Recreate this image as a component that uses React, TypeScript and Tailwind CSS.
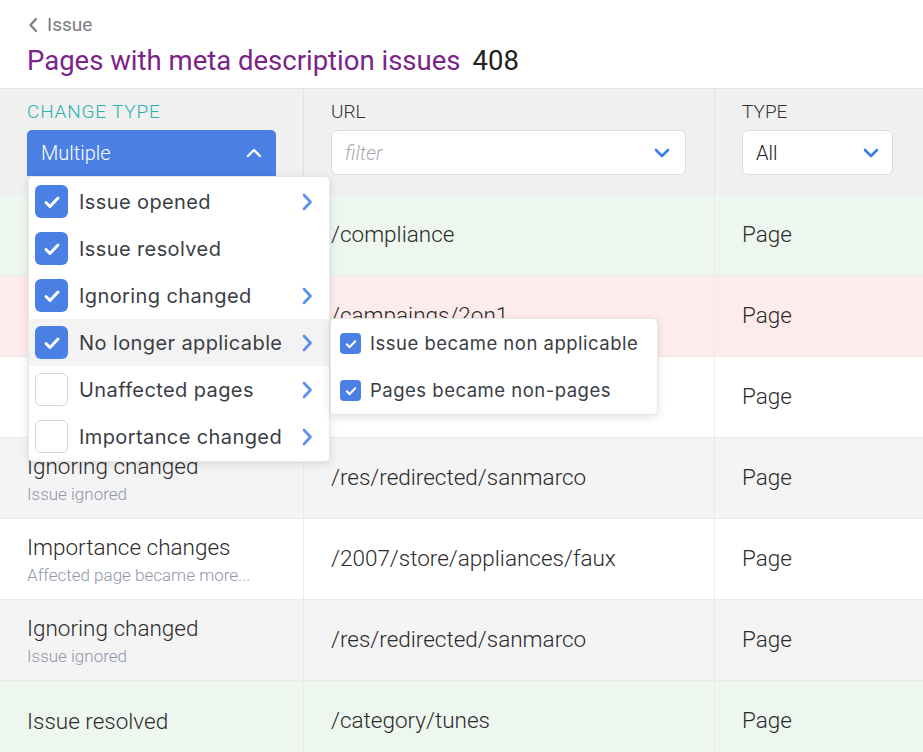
import React from "react";

const Check = ({ size = 18 }: { size?: number }) => (
  <svg width={size} height={size} viewBox="0 0 20 20" fill="none">
    <path d="M4 10.5l4 4 8-8.5" stroke="white" strokeWidth="3" strokeLinecap="round" strokeLinejoin="round" />
  </svg>
);

const ChevronRight = () => (
  <svg width="14" height="20" viewBox="0 0 14 20" fill="none">
    <path d="M4 3l6.5 7L4 17" stroke="#5a8ef0" strokeWidth="2.6" strokeLinecap="round" strokeLinejoin="round" />
  </svg>
);

const ChevronDown = ({ color = "#3a7ee8" }: { color?: string }) => (
  <svg width="16" height="10" viewBox="0 0 16 10" fill="none">
    <path d="M2 2l6 6 6-6" stroke={color} strokeWidth="2.6" strokeLinecap="round" strokeLinejoin="round" />
  </svg>
);

const ChevronUp = () => (
  <svg width="16" height="10" viewBox="0 0 16 10" fill="none">
    <path d="M2 8l6-6 6 6" stroke="white" strokeWidth="2.4" strokeLinecap="round" strokeLinejoin="round" />
  </svg>
);

type Row = { title: string; sub?: string; url: string; type: string; bg: string };

const rows: Row[] = [
  { title: "Issue resolved", url: "/compliance", type: "Page", bg: "bg-[#edf7ef]" },
  { title: "Issue opened", url: "/campaings/2on1", type: "Page", bg: "bg-[#fdeceb]" },
  { title: "No longer applicable", url: "/blog/summer-sale", type: "Page", bg: "bg-white" },
  { title: "Ignoring changed", sub: "Issue ignored", url: "/res/redirected/sanmarco", type: "Page", bg: "bg-[#f4f4f4]" },
  { title: "Importance changes", sub: "Affected page became more...", url: "/2007/store/appliances/faux", type: "Page", bg: "bg-white" },
  { title: "Ignoring changed", sub: "Issue ignored", url: "/res/redirected/sanmarco", type: "Page", bg: "bg-[#f4f4f4]" },
  { title: "Issue resolved", url: "/category/tunes", type: "Page", bg: "bg-[#edf7ef]" },
];

const menuItems = [
  { label: "Issue opened", checked: true, arrow: true },
  { label: "Issue resolved", checked: true, arrow: false },
  { label: "Ignoring changed", checked: true, arrow: true },
  { label: "No longer applicable", checked: true, arrow: true, active: true },
  { label: "Unaffected pages", checked: false, arrow: true },
  { label: "Importance changed", checked: false, arrow: true },
];

export default function App() {
  return (
    <div className="relative w-[923px] h-[752px] overflow-hidden bg-white font-['Roboto',sans-serif] text-[#2b2b2b]">
      {/* Page header */}
      <div className="h-[88px] px-[27px] pt-[12px]">
        <div className="flex items-center gap-[9px] h-[26px] text-[19px] text-[#7d7d7d]">
          <svg width="10" height="16" viewBox="0 0 10 16" fill="none" className="ml-[1px]">
            <path d="M8 2L2.5 8 8 14" stroke="#7d7d7d" strokeWidth="2.2" strokeLinecap="round" strokeLinejoin="round" />
          </svg>
          <span>Issue</span>
        </div>
        <div className="mt-[6px] flex items-baseline text-[27.5px] leading-[34px]">
          <span className="text-[#7b2488]">Pages with meta description issues</span>
          <span className="ml-[12px] text-[#222]">408</span>
        </div>
      </div>

      {/* Table header */}
      <div className="flex h-[107px] bg-[#f0f0f0] border-t border-[#e2e2e2]">
        <div className="w-[304px] shrink-0 border-r border-[#e2e2e2] pl-[27px] pt-[11px]">
          <div className="text-[19px] leading-[24px] tracking-[0.8px] text-[#2ab3ae] font-light">CHANGE TYPE</div>
          <div className="mt-[6px] w-[249px] h-[46px] rounded-t-[5px] bg-[#4a7fe3] flex items-center justify-between pl-[14px] pr-[14px]">
            <span className="text-[20px] text-white font-light">Multiple</span>
            <ChevronUp />
          </div>
        </div>
        <div className="w-[411px] shrink-0 border-r border-[#e2e2e2] pl-[27px] pt-[11px]">
          <div className="text-[19px] leading-[24px] text-[#333] font-light">URL</div>
          <div className="mt-[6px] w-[355px] h-[45px] rounded-[6px] bg-white border border-[#dcdcdc] flex items-center justify-between pl-[13px] pr-[15px]">
            <span className="text-[20px] italic text-[#a8abb3] font-light">filter</span>
            <ChevronDown />
          </div>
        </div>
        <div className="flex-1 pl-[27px] pt-[11px]">
          <div className="text-[19px] leading-[24px] text-[#333] font-light">TYPE</div>
          <div className="mt-[6px] w-[151px] h-[45px] rounded-[6px] bg-white border border-[#dcdcdc] flex items-center justify-between pl-[13px] pr-[13px]">
            <span className="text-[20px] text-[#222] font-light">All</span>
            <ChevronDown />
          </div>
        </div>
      </div>

      {/* Rows */}
      {rows.map((r, i) => (
        <div key={i} className={`flex h-[81px] border-b border-[#ebebeb] ${r.bg}`}>
          <div className="w-[304px] shrink-0 border-r border-[#ebebeb] pl-[27px] flex flex-col justify-center">
            <div className="text-[22.5px] leading-[27px] font-light text-[#2b2b2b]">{r.title}</div>
            {r.sub && <div className="mt-[4px] text-[17px] leading-[20px] font-light text-[#8f97aa]">{r.sub}</div>}
          </div>
          <div className="w-[411px] shrink-0 border-r border-[#ebebeb] pl-[27px] flex items-center">
            <span className="text-[22.5px] font-light text-[#2b2b2b]">{r.url}</span>
          </div>
          <div className="flex-1 pl-[27px] flex items-center">
            <span className="text-[22.5px] font-light text-[#2b2b2b]">{r.type}</span>
          </div>
        </div>
      ))}

      {/* Dropdown menu */}
      <div className="absolute left-[28px] top-[176px] w-[302px] py-[1px] bg-white rounded-[5px] border border-[#e8e8e8] shadow-[0_2px_8px_rgba(0,0,0,0.12)] font-['Inter',sans-serif]">
        {menuItems.map((m, i) => (
          <div key={i} className={`flex items-center h-[47px] pl-[6px] pr-[15px] ${m.active ? "bg-[#f3f3f3]" : ""}`}>
            {m.checked ? (
              <div className="w-[33px] h-[33px] rounded-[6px] bg-[#4a7fe3] flex items-center justify-center">
                <Check size={20} />
              </div>
            ) : (
              <div className="w-[33px] h-[33px] rounded-[6px] bg-white border border-[#d6d6d6]" />
            )}
            <span className="ml-[11px] text-[20px] tracking-[0.4px] text-[#3a3e45] flex-1">{m.label}</span>
            {m.arrow && <ChevronRight />}
          </div>
        ))}
      </div>

      {/* Submenu */}
      <div className="absolute left-[330px] top-[318px] w-[328px] h-[97px] py-[1px] bg-white rounded-[5px] border border-[#e8e8e8] shadow-[0_2px_8px_rgba(0,0,0,0.12)] font-['Inter',sans-serif]">
        {["Issue became non applicable", "Pages became non-pages"].map((t) => (
          <div key={t} className="flex items-center h-[47px] pl-[9px]">
            <div className="w-[21px] h-[21px] rounded-[4px] bg-[#4a7fe3] flex items-center justify-center">
              <Check size={14} />
            </div>
            <span className="ml-[9px] text-[18.5px] tracking-[0.5px] text-[#3a3e45]">{t}</span>
          </div>
        ))}
      </div>
    </div>
  );
}
